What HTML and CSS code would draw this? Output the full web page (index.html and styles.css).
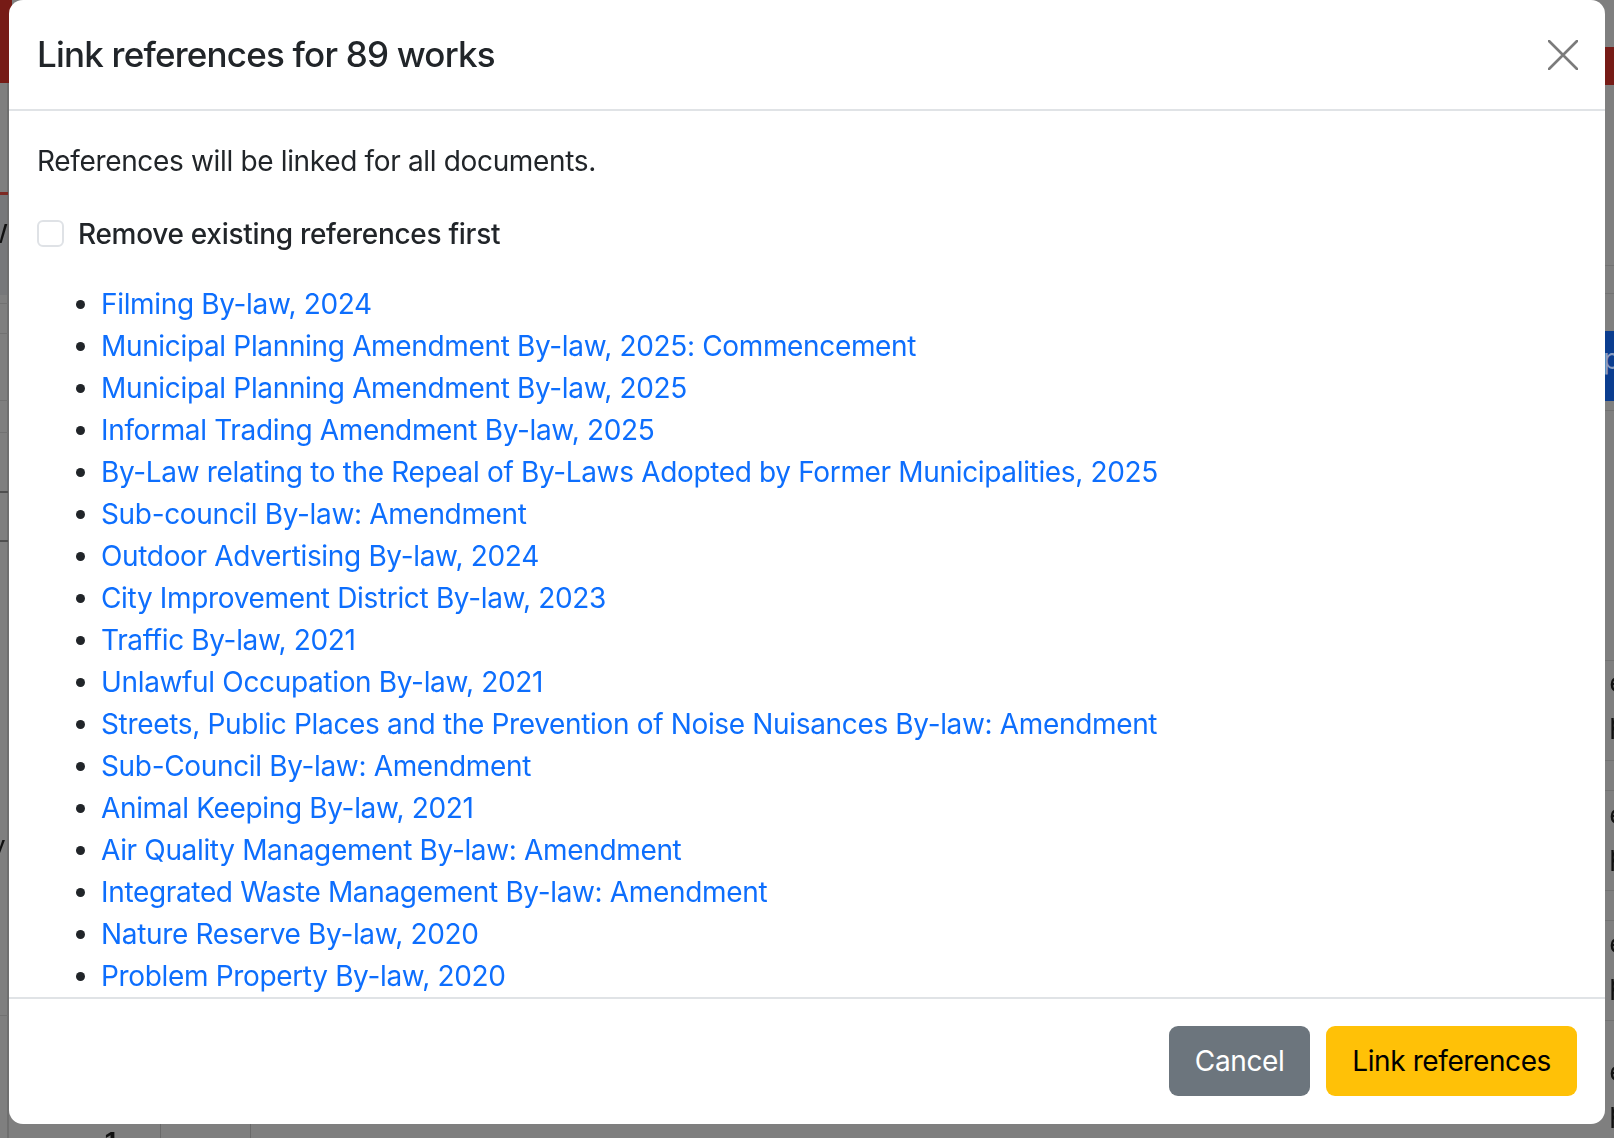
FILE: index.html
```html
<!DOCTYPE html>
<html lang="en">
<head>
<meta charset="utf-8">
<title>Link references</title>
<link rel="stylesheet" href="styles.css">
</head>
<body>
<div class="backdrop">
  <div class="deco red-left"></div>
  <div class="deco red-right"></div>
  <div class="deco vline-left"></div>
  <div class="deco redline-left"></div>
  <div class="deco band-left"></div>
  <span class="deco frag w-frag">W</span>
  <div class="deco hl" style="top:303px"></div>
  <div class="deco hl" style="top:333px"></div>
  <div class="deco hl" style="top:400px"></div>
  <div class="deco hl" style="top:432px"></div>
  <div class="deco hl dark" style="top:491px"></div>
  <div class="deco hl dark" style="top:540px"></div>
  <div class="deco hl" style="top:1015px"></div>
  <span class="deco frag y-frag">y</span>
  <div class="deco hr" style="top:265px"></div>
  <div class="deco hr" style="top:293px"></div>
  <div class="deco blue-right"><span>p</span></div>
  <div class="deco hr" style="top:410px"></div>
  <div class="deco hr" style="top:660px"></div>
  <div class="deco hr" style="top:760px"></div>
  <div class="deco hr" style="top:790px"></div>
  <div class="deco hr" style="top:890px"></div>
  <div class="deco hr" style="top:920px"></div>
  <div class="deco hr" style="top:1020px"></div>
  <span class="deco frag ep" style="top:662px">e<br>p</span>
  <span class="deco frag ep" style="top:794px">e<br>p</span>
  <span class="deco frag ep" style="top:923px">e<br>p</span>
  <span class="deco frag ep" style="top:1051px">e<br>p</span>
  <div class="deco vb" style="left:160px"></div>
  <div class="deco vb" style="left:250px"></div>
  <span class="deco frag one">1</span>
</div>

<div class="modal">
  <div class="modal-header">
    <h5 class="modal-title">Link references for 89 works</h5>
    <button class="btn-close" type="button" aria-label="Close">
      <svg width="30" height="30" viewBox="0 0 30 30"><path d="M1 1 L29 29 M29 1 L1 29" stroke="#7b7b7b" stroke-width="2.6" stroke-linecap="round" fill="none"/></svg>
    </button>
  </div>
  <div class="modal-body">
    <p class="intro">References will be linked for all documents.</p>
    <div class="form-check">
      <span class="check-box"></span>
      <label class="check-label">Remove existing references first</label>
    </div>
    <ul class="works">
      <li><a href="#">Filming By-law, 2024</a></li>
      <li><a href="#">Municipal Planning Amendment By-law, 2025: Commencement</a></li>
      <li><a href="#">Municipal Planning Amendment By-law, 2025</a></li>
      <li><a href="#">Informal Trading Amendment By-law, 2025</a></li>
      <li><a href="#">By-Law relating to the Repeal of By-Laws Adopted by Former Municipalities, 2025</a></li>
      <li><a href="#">Sub-council By-law: Amendment</a></li>
      <li><a href="#">Outdoor Advertising By-law, 2024</a></li>
      <li><a href="#">City Improvement District By-law, 2023</a></li>
      <li><a href="#">Traffic By-law, 2021</a></li>
      <li><a href="#">Unlawful Occupation By-law, 2021</a></li>
      <li><a href="#">Streets, Public Places and the Prevention of Noise Nuisances By-law: Amendment</a></li>
      <li><a href="#">Sub-Council By-law: Amendment</a></li>
      <li><a href="#">Animal Keeping By-law, 2021</a></li>
      <li><a href="#">Air Quality Management By-law: Amendment</a></li>
      <li><a href="#">Integrated Waste Management By-law: Amendment</a></li>
      <li><a href="#">Nature Reserve By-law, 2020</a></li>
      <li><a href="#">Problem Property By-law, 2020</a></li>
      <li><a href="#">Electricity Supply By-law, 2020</a></li>
      <li><a href="#">Events By-law, 2019</a></li>
    </ul>
  </div>
  <div class="modal-footer">
    <button class="btn btn-secondary" type="button">Cancel</button>
    <button class="btn btn-warning" type="button">Link references</button>
  </div>
</div>
</body>
</html>
```

FILE: styles.css
```css
* { box-sizing: border-box; }

html, body {
  margin: 0;
  padding: 0;
  width: 100%;
  height: 100%;
  overflow: hidden;
}

body {
  background: #7f7f7f;
  font-family: Inter, "Noto Sans", "Liberation Sans", sans-serif;
  color: #212529;
}

/* page behind the dimmed backdrop */
.backdrop {
  position: fixed;
  inset: 0;
  background: #7f7f7f;
}
.deco { position: absolute; }
.red-left { left: 0; top: 0; width: 12px; height: 83px; background: #761b16; }
.red-right { right: 0; top: 47px; width: 12px; height: 38px; background: #761b16; }
.vline-left { left: 7px; top: 83px; bottom: 0; width: 2px; background: #6f6f6f; }
.redline-left { left: 0; top: 192px; width: 8px; height: 3px; background: #7d2a24; }
.band-left { left: 0; top: 195px; width: 7px; height: 100px; background: #77787a; }
.hl { left: 0; width: 8px; height: 1px; background: #727272; }
.hl.dark { height: 2px; background: #4f4f4f; }
.hr { right: 0; width: 9px; height: 1px; background: #727272; }
.blue-right {
  right: 0; top: 331px; width: 9px; height: 70px; background: #0b3d8f;
  overflow: hidden;
}
.blue-right span {
  position: absolute; left: -2px; top: 14px;
  color: #8a9cc0; font-size: 28px; line-height: 1;
}
.frag {
  font-family: "Liberation Sans", sans-serif;
  font-size: 28px;
  line-height: 1;
  color: #111;
}
.w-frag { left: -19px; top: 220px; }
.y-frag { left: -9px; top: 832px; }
.ep { right: -11px; line-height: 41px; font-size: 28px; color: #111; }
.vb { top: 1122px; width: 1px; height: 20px; background: #6a6a6a; }
.one { left: 104px; top: 1128px; font-weight: 700; }

/* modal */
.modal {
  position: fixed;
  left: 9px;
  top: 0;
  width: 1596px;
  height: 1124px;
  background: #fff;
  border-radius: 14px;
  display: flex;
  flex-direction: column;
  overflow: hidden;
}

.modal-header {
  display: flex;
  align-items: center;
  justify-content: space-between;
  padding: 28px 27px 28px 28px;
  height: 111px;
  border-bottom: 2px solid #e0e3e6;
  flex: none;
}

.modal-title {
  margin: 0;
  font-size: 35px;
  font-weight: 500;
  line-height: 53px;
  letter-spacing: -0.8px;
  color: #212529;
}

.btn-close {
  border: 0;
  background: transparent;
  padding: 0;
  width: 30px;
  height: 30px;
  display: flex;
  margin-top: 0;
  cursor: pointer;
}

.modal-body {
  flex: none;
  height: 886px;
  overflow: hidden;
  padding: 29px 28px 0 28px;
  font-size: 28px;
  line-height: 42px;
  letter-spacing: -0.34px;
}

.intro { margin: 0 0 31px; }

.form-check {
  display: flex;
  align-items: flex-start;
  gap: 14px;
  height: 42px;
  margin-bottom: 28px;
}

.check-box {
  flex: none;
  width: 27px;
  height: 27px;
  margin-top: 7px;
  border: 2px solid #dfe2e6;
  border-radius: 6px;
  background: #fff;
}

.check-label {
  font-weight: 500;
  letter-spacing: -0.3px;
  color: #212529;
}

.works {
  margin: 0;
  padding-left: 64px;
  list-style: disc;
}
.works li { line-height: 42px; }
.works li::marker { color: #212529; }
.works a {
  color: #0d6efd;
  text-decoration: none;
}

.modal-footer {
  flex: none;
  display: flex;
  justify-content: flex-end;
  align-items: flex-start;
  gap: 16px;
  border-top: 2px solid #e0e3e6;
  padding: 27px 28px 28px;
  height: 127px;
}

.btn {
  height: 70px;
  padding: 0 26px;
  border: 0;
  border-radius: 9px;
  font-family: inherit;
  font-size: 28px;
  line-height: 70px;
  letter-spacing: -0.4px;
  cursor: pointer;
}
.btn-secondary { background: #6c757d; color: #fff; }
.btn-warning { background: #ffc107; color: #000; }
```
